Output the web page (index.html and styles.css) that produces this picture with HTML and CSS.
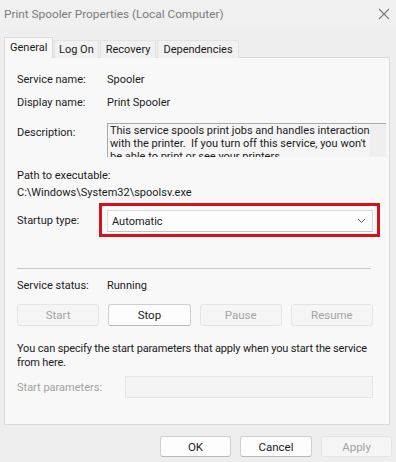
FILE: index.html
```html
<!DOCTYPE html>
<html lang="en">
  <head>
    <meta charset="UTF-8" />
    <meta name="viewport" content="width=device-width, initial-scale=1.0" />
    <title>Print Spooler Properties</title>
    <link rel="stylesheet" href="styles.css">
  </head>
  <body>
    <div class="window">
      <div class="titlebar">
        <span class="title">Print Spooler Properties (Local Computer)</span>
        <svg class="close" width="12" height="12" viewBox="0 0 12 12">
          <path d="M1 1L11 11M11 1L1 11" stroke="#7a7a7a" stroke-width="1.1" fill="none" />
        </svg>
      </div>

      <div class="tabs">
        <div class="tab active">General</div>
        <div class="tab">Log On</div>
        <div class="tab wide">Recovery</div>
        <div class="tab wide">Dependencies</div>
      </div>

      <div class="panel">
        <div class="row">
          <span>Service name:</span>
          <span>Spooler</span>
        </div>
        <div class="row gap-7">
          <span>Display name:</span>
          <span>Print Spooler</span>
        </div>
        <div class="row desc-row">
          <span class="desc-label">Description:</span>
          <div class="desc-box">
            <div class="desc-text">
              This service spools print jobs and handles interaction<br />
              with the printer.&nbsp; If you turn off this service, you won't<br />
              be able to print or see your printers.
            </div>
            <div class="desc-scroll"></div>
          </div>
        </div>

        <div class="path-label">Path to executable:</div>
        <div class="path-value">C:\Windows\System32\spoolsv.exe</div>

        <div class="startup-row">
          <span>Startup type:</span>
          <div class="highlight">
            <div class="select">
              <span>Automatic</span>
              <svg width="9" height="6" viewBox="0 0 9 6">
                <path d="M1 1L4.5 4.5L8 1" stroke="#6a6a6a" stroke-width="1" fill="none" />
              </svg>
            </div>
          </div>
        </div>

        <hr class="separator" />

        <div class="row">
          <span>Service status:</span>
          <span>Running</span>
        </div>

        <div class="service-buttons">
          <button class="btn" disabled>Start</button>
          <button class="btn">Stop</button>
          <button class="btn" disabled>Pause</button>
          <button class="btn" disabled>Resume</button>
        </div>

        <p class="hint">
          You can specify the start parameters that apply when you start the service<br />
          from here.
        </p>

        <div class="params-row">
          <span>Start parameters:</span>
          <div class="params-input"></div>
        </div>
      </div>

      <div class="footer">
        <button class="btn footer-btn">OK</button>
        <button class="btn footer-btn cancel">Cancel</button>
        <button class="btn footer-btn" disabled>Apply</button>
      </div>
    </div>
  </body>
</html>
```

FILE: styles.css
```css
* {
  margin: 0;
  padding: 0;
  box-sizing: border-box;
}
body {
  background-color: #ededed;
  color: #1b1b1b;
  font-family: Roboto, "Liberation Sans", sans-serif;
  font-size: 11px;
}
.window {
  width: 396px;
  height: 462px;
  background-color: #eeeeee;
}
.titlebar {
  height: 28px;
  display: flex;
  align-items: center;
  justify-content: space-between;
  padding: 0 6px 0 4px;
  background-color: #f0f0f0;
}
.title {
  color: #7b7b7b;
  font-size: 11.8px;
}
.tabs {
  display: flex;
  align-items: flex-end;
  height: 29px;
  padding-left: 4px;
}
.tab {
  height: 18px;
  padding: 0 4px;
  line-height: 17px;
  background-color: #f1f1f1;
  border: 1px solid #e2e2e2;
  border-bottom: none;
  margin-bottom: -1px;
}
.tab + .tab {
  margin-left: 1px;
}
.tab.wide {
  padding: 0 5px;
}
.tab.active {
  height: 21px;
  line-height: 20px;
  width: 49px;
  padding: 0 5px;
  background-color: #f8f8f8;
  border-color: #dadada;
  position: relative;
  z-index: 1;
}
.panel {
  margin-left: 4px;
  width: 386px;
  height: 368px;
  border: 1px solid #dadada;
  background-color: #f8f8f8;
  padding: 14px 16px 0 12px;
}
.row {
  display: grid;
  grid-template-columns: 90px 1fr;
  line-height: 16px;
}
.gap-7 {
  margin-top: 7px;
}
.desc-row {
  margin-top: 12px;
  align-items: start;
}
.desc-label {
  margin-top: 2px;
}
.desc-box {
  display: flex;
  align-items: flex-start;
}
.desc-text {
  flex: 1;
  height: 34px;
  overflow: hidden;
  white-space: nowrap;
  line-height: 13px;
  padding: 0 0 0 2px;
  border-top: 1px solid #a8a8a8;
  border-left: 1px solid #a8a8a8;
  background-color: #f5f5f5;
}
.desc-scroll {
  width: 16px;
  height: 34px;
  border-top: 1px solid #a8a8a8;
  background-color: #efefef;
}
.path-label {
  margin-top: 11px;
  line-height: 16px;
}
.path-value {
  margin-top: 1px;
  line-height: 16px;
}
.startup-row {
  display: grid;
  grid-template-columns: 82px 1fr;
  align-items: center;
  margin-top: 2px;
  margin-right: -7px;
}
.highlight {
  border: 3px solid #d3121c;
  padding: 4px 4px 2px 5px;
}
.select {
  height: 22px;
  display: flex;
  align-items: center;
  justify-content: space-between;
  padding: 0 6px 0 4px;
  background-color: #fdfdfd;
  border: 1px solid #dcdcdc;
  border-bottom-color: #c4c4c4;
}
.separator {
  border: none;
  border-top: 1px solid #c6c6c6;
  margin: 31px 2px 9px 0;
}
.service-buttons {
  display: grid;
  grid-template-columns: repeat(4, 1fr);
  gap: 9px;
  margin-top: 10px;
}
.btn {
  height: 22px;
  font-family: inherit;
  font-size: 11.5px;
  color: #1b1b1b;
  background-color: #fdfdfd;
  border: 1px solid #cfcfcf;
  border-bottom-color: #b8b8b8;
  border-radius: 3px;
}
.btn:disabled {
  color: #a3a3a3;
  background-color: #f5f5f5;
  border-color: #e4e4e4;
}
.hint {
  margin-top: 16px;
  line-height: 14px;
  white-space: nowrap;
  letter-spacing: -0.15px;
}
.params-row {
  display: grid;
  grid-template-columns: 108px 1fr;
  align-items: center;
  margin-top: 6px;
  color: #a3a3a3;
}
.params-input {
  height: 22px;
  background-color: #f4f4f4;
  border: 1px solid #e6e6e6;
}
.footer {
  display: flex;
  justify-content: flex-end;
  gap: 9px;
  padding: 11px 4px 0 0;
}
.footer-btn {
  width: 71px;
  height: 21px;
}
.footer-btn.cancel {
  width: 72px;
}
```
